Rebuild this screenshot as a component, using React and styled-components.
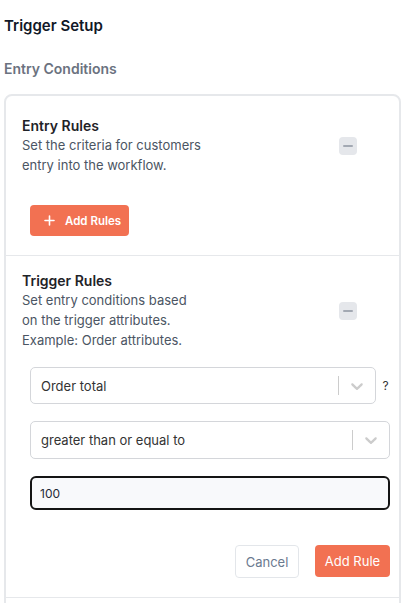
import styled, { createGlobalStyle } from "styled-components";

const GlobalStyle = createGlobalStyle`
  * {
    box-sizing: border-box;
  }

  body {
    margin: 0;
    background: #ffffff;
    font-family: Inter, "Noto Sans", "Liberation Sans", sans-serif;
    color: #1f2937;
  }
`;

function Chevron() {
  return (
    <svg width="20" height="20" viewBox="0 0 20 20" fill="currentColor">
      <path d="M4.516 7.548c0.436-0.446 1.043-0.481 1.576 0l3.908 3.747 3.908-3.747c0.533-0.481 1.141-0.446 1.574 0 0.436 0.445 0.408 1.197 0 1.615-0.406 0.418-4.695 4.502-4.695 4.502-0.217 0.223-0.502 0.335-0.787 0.335s-0.57-0.112-0.789-0.335c0 0-4.287-4.084-4.695-4.502s-0.436-1.170 0-1.615z" />
    </svg>
  );
}

function Plus() {
  return (
    <svg width="11" height="11" viewBox="0 0 11 11" fill="none" stroke="currentColor" strokeWidth="1.6" strokeLinecap="round">
      <path d="M5.5 1v9M1 5.5h9" />
    </svg>
  );
}

function Dropdown({ value }) {
  return (
    <Select>
      <SelectValue>{value}</SelectValue>
      <Indicators>
        <IndicatorSeparator />
        <DropdownIndicator>
          <Chevron />
        </DropdownIndicator>
      </Indicators>
    </Select>
  );
}

export default function App() {
  return (
    <>
      <GlobalStyle />
      <Page>
        <PageTitle>Trigger Setup</PageTitle>
        <SectionLabel>Entry Conditions</SectionLabel>
        <Card>
          <Section $top={20}>
            <Header>
              <TextBlock>
                <RuleTitle>Entry Rules</RuleTitle>
                <RuleText>Set the criteria for customers entry into the workflow.</RuleText>
              </TextBlock>
              <Collapse aria-label="collapse" />
            </Header>
            <AddRulesButton>
              <Plus />
              Add Rules
            </AddRulesButton>
          </Section>

          <Section $top={15} $divider>
            <Header>
              <TextBlock>
                <RuleTitle>Trigger Rules</RuleTitle>
                <RuleText>
                  Set entry conditions based on the trigger attributes. Example: Order attributes.
                </RuleText>
              </TextBlock>
              <Collapse aria-label="collapse" />
            </Header>

            <Form>
              <FieldRow>
                <Dropdown value="Order total" />
                <Help>?</Help>
              </FieldRow>
              <Dropdown value="greater than or equal to" />
              <ValueInput defaultValue="100" />
              <Actions>
                <CancelButton>Cancel</CancelButton>
                <PrimaryButton>Add Rule</PrimaryButton>
              </Actions>
            </Form>
          </Section>

          <Section $top={20} $divider>
            <Spacer />
          </Section>
        </Card>
      </Page>
    </>
  );
}

const Page = styled.div`
  padding: 16px 19px 0 4px;
`;

const PageTitle = styled.h1`
  margin: 0;
  font-size: 15px;
  line-height: 20px;
  font-weight: 600;
  color: #111827;
`;

const SectionLabel = styled.h2`
  margin: 23px 0 15px;
  font-size: 14px;
  line-height: 20px;
  font-weight: 600;
  color: #6b7280;
`;

const Card = styled.div`
  width: 397px;
  border: 2px solid #e6e8eb;
  border-radius: 8px;
  overflow: hidden;
`;

const Section = styled.div`
  padding: ${(p) => p.$top}px 0 19px 16px;
  border-top: ${(p) => (p.$divider ? "1.5px solid #e6e8eb" : "none")};
`;

const Header = styled.div`
  display: flex;
  align-items: center;
  justify-content: space-between;
  padding-right: 42px;
`;

const TextBlock = styled.div`
  width: 182px;
`;

const RuleTitle = styled.h3`
  margin: 0;
  font-size: 14px;
  line-height: 19px;
  font-weight: 600;
  color: #1f2328;
`;

const RuleText = styled.p`
  margin: 0;
  font-size: 13px;
  line-height: 20px;
  color: #4b5563;
`;

const Collapse = styled.button`
  position: relative;
  width: 18px;
  height: 18px;
  padding: 0;
  border: none;
  border-radius: 4px;
  background: #e5e7eb;

  &::after {
    content: "";
    position: absolute;
    left: 4px;
    right: 4px;
    top: 8px;
    height: 2px;
    border-radius: 1px;
    background: #a3a9b3;
  }
`;

const AddRulesButton = styled.button`
  display: flex;
  align-items: center;
  gap: 10px;
  height: 31px;
  margin: 30px 0 0 8px;
  padding: 0 8px 0 14px;
  border: none;
  border-radius: 4px;
  background: #f27152;
  color: #ffffff;
  font-family: inherit;
  font-size: 11.5px;
  font-weight: 600;
`;

const Form = styled.div`
  display: flex;
  flex-direction: column;
  gap: 17px;
  margin: 17px 9px 0 8px;
`;

const FieldRow = styled.div`
  display: flex;
  align-items: center;
`;

const Help = styled.span`
  width: 14px;
  padding-left: 5px;
  text-align: center;
  font-size: 12px;
  color: #333333;
`;

const Select = styled.div`
  flex: 1;
  display: flex;
  align-items: center;
  height: 37px;
  border: 1px solid #d4d6da;
  border-radius: 5px;
  background: #ffffff;
`;

const SelectValue = styled.div`
  flex: 1;
  padding-left: 10px;
  font-size: 13px;
  color: #333333;
`;

const Indicators = styled.div`
  display: flex;
  align-items: stretch;
  align-self: stretch;
`;

const IndicatorSeparator = styled.span`
  width: 1px;
  margin: 8px 0;
  background: #cccccc;
`;

const DropdownIndicator = styled.div`
  display: flex;
  align-items: center;
  padding: 8px;
  color: #cccccc;
`;

const ValueInput = styled.input`
  height: 34px;
  padding: 0 8px;
  border: 2px solid #141414;
  border-radius: 6px;
  background: #f8f9fb;
  font-family: inherit;
  font-size: 12px;
  color: #1f2937;
  outline: none;
`;

const Actions = styled.div`
  display: flex;
  justify-content: flex-end;
  gap: 16px;
  margin-top: 18px;
`;

const CancelButton = styled.button`
  width: 64px;
  height: 33px;
  border: 1px solid #e3e6ea;
  border-radius: 4px;
  background: #ffffff;
  color: #6b7a8f;
  font-family: inherit;
  font-size: 13px;
`;

const PrimaryButton = styled.button`
  width: 75px;
  height: 32px;
  border: none;
  border-radius: 4px;
  background: #f27152;
  color: #ffffff;
  font-family: inherit;
  font-size: 13px;
`;

const Spacer = styled.div`
  height: 60px;
`;
